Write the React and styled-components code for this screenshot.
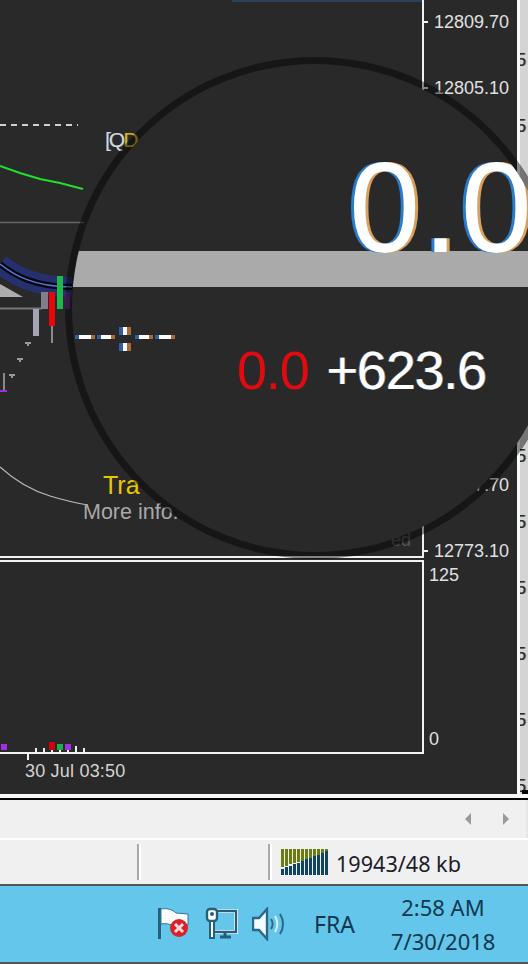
import React from "react";
import styled, { createGlobalStyle } from "styled-components";

const GlobalStyle = createGlobalStyle`
	html, body {
		margin: 0;
		padding: 0;
		background: #f0f0f0;
	}
	* {
		box-sizing: border-box;
	}
`;

const Page = styled.div`
	position: relative;
	width: 528px;
	height: 964px;
	overflow: hidden;
	display: flex;
	flex-direction: column;
	font-family: "Liberation Sans", Arial, sans-serif;
`;

const ChartWindow = styled.div`
	display: flex;
	height: 794px;
	background: #292929;
`;

const FrameColumn = styled.div`
	width: 424px;
	display: flex;
	flex-direction: column;
`;

const PriceFrame = styled.div`
	position: relative;
	height: 558px;
	border-right: 2px solid #f2f2f2;
	border-bottom: 2px solid #f2f2f2;
`;

const VolumeFrame = styled.div`
	position: relative;
	height: 194px;
	margin-top: 2px;
	border-top: 2px solid #f2f2f2;
	border-right: 2px solid #f2f2f2;
	border-bottom: 2px solid #f2f2f2;
`;

const ChartDrawing = styled.svg`
	display: block;
	width: 100%;
	height: 100%;
`;

const TimeLabel = styled.div`
	position: relative;
	margin-top: 8px;
	padding-left: 25px;
	font-size: 18px;
	line-height: 18px;
	letter-spacing: 0.2px;
	color: #d4d4d4;

	&::before {
		content: "";
		position: absolute;
		left: 27px;
		top: -8px;
		width: 2px;
		height: 6px;
		background: #f2f2f2;
	}
`;

const AxisColumn = styled.div`
	width: 93px;
	display: flex;
	flex-direction: column;
`;

const PriceAxis = styled.div`
	height: 547px;
	margin-top: 13px;
	display: flex;
	flex-direction: column;
	justify-content: space-between;
`;

const VolumeAxis = styled.div`
	height: 182px;
	margin-top: 6px;
	padding-left: 5px;
	display: flex;
	flex-direction: column;
	justify-content: space-between;
`;

const AxisLabel = styled.div`
	display: flex;
	align-items: center;
	height: 18px;
	font-size: 18px;
	line-height: 18px;
	color: #e0e0e0;

	&::before {
		content: "";
		display: ${(p) => (p.$tick ? "block" : "none")};
		width: 4px;
		height: 2px;
		margin-right: 6px;
		background: #f2f2f2;
	}
`;

const NeighbourStrip = styled.div`
	position: relative;
	width: 11px;
	padding-top: 27px;
	overflow: hidden;
	background: #d4d4d4;
	border-left: 3px solid #fafafa;

	&::after {
		content: "";
		position: absolute;
		right: 0;
		bottom: 0;
		width: 6px;
		height: 4px;
		background: #000;
	}
`;

const NeighbourDigit = styled.div`
	height: 66px;
	margin-left: -4px;
	font-size: 18px;
	line-height: 66px;
	color: #14304f;
	text-shadow: 1px 0 #c08a40;
`;

const ChartText = styled.div`
	position: absolute;
	left: ${(p) => p.$left}px;
	top: ${(p) => p.$top}px;
	font-size: ${(p) => p.$size}px;
	line-height: 1;
	color: ${(p) => p.$color};
	white-space: nowrap;
`;

const QuoteTag = styled.div`
	position: absolute;
	left: 105px;
	top: 129px;
	font-size: 21px;
	line-height: 1;
	letter-spacing: -2px;
	color: #d8d8d8;
	text-shadow: 1px 0 #33507a;

	span {
		color: #d8b400;
	}
`;

const WindowEdge = styled.div`
	height: 6px;
	background: #f6f6f6;
	border-bottom: 2px solid #000;
`;

const ScrollRow = styled.div`
	height: 38px;
	display: flex;
	align-items: center;
	justify-content: flex-end;
	gap: 32px;
	padding-right: 17px;
	background: #f0f0f0;
	border-right: 2px solid #e6e6e6;
`;

const ScrollArrow = styled.div`
	width: 0;
	height: 0;
	border-top: 6px solid transparent;
	border-bottom: 6px solid transparent;
	border-left: ${(p) => (p.$right ? "6px solid #9a9a9a" : "none")};
	border-right: ${(p) => (p.$right ? "none" : "6px solid #9a9a9a")};
`;

const StatusBar = styled.div`
	height: 46px;
	display: flex;
	align-items: center;
	background: #f0f0f0;
	border-top: 2px solid #fff;
`;

const StatusCell = styled.div`
	width: ${(p) => p.$width}px;
	height: 36px;
	display: flex;
	align-items: center;
	border-right: 2px solid #fff;
	position: relative;

	&::after {
		content: "";
		position: absolute;
		right: 0;
		top: 0;
		bottom: 0;
		width: 2px;
		background: #a8a8a8;
	}
`;

const TrafficCell = styled.div`
	display: flex;
	align-items: center;
	gap: 8px;
	padding-left: 9px;
	font-family: "Noto Sans", sans-serif;
	font-size: 21.6px;
	color: #1c1c2c;

	span {
		padding-top: 3px;
	}
`;

const Taskbar = styled.div`
	height: 80px;
	display: flex;
	align-items: center;
	padding-left: 157px;
	background: #63c6ea;
	border-top: 2px solid #555;
	border-bottom: 2px solid #555;
	font-family: "Noto Sans", sans-serif;
	color: #12384f;
`;

const TrayIcons = styled.div`
	display: flex;
	gap: 14px;
`;

const Language = styled.div`
	margin-left: 29px;
	font-size: 23px;
`;

const Clock = styled.div`
	width: 104px;
	margin-left: 36px;
	text-align: center;
	font-size: 22px;
	line-height: 34px;
`;

const Magnifier = styled.div`
	position: absolute;
	left: 65px;
	top: 57px;
	width: 500px;
	height: 502px;
	border-radius: 50%;
	border: 7px solid rgba(0, 0, 0, 0.45);
	background: #292929;
	background-clip: padding-box;
`;

const MagnifierBody = styled.div`
	width: 100%;
	height: 100%;
	border-radius: 50%;
	overflow: hidden;
	position: relative;
`;

const BigReading = styled.div`
	height: 187px;
	padding-left: 277px;
	display: flex;
	align-items: flex-end;
	font-size: 128px;
	line-height: 128px;
	letter-spacing: 2.5px;
	color: #fff;
	text-shadow: -3px 0 #2d7cc8, 3px 0 #d9a060;
	white-space: nowrap;

	span {
		margin-bottom: -21px;
	}
`;

const GreyBand = styled.div`
	height: 36px;
	background: #aaa;
`;

const ReadingRow = styled.div`
	display: flex;
	margin-top: 52px;
	padding-left: 165px;
	gap: 18px;
	font-size: 54px;
	line-height: 62px;
	letter-spacing: -1.2px;
	white-space: nowrap;
`;

const Reading = styled.div`
	color: ${(p) => p.$color};
	text-shadow: ${(p) => (p.$fringe ? "-1px 0 #2d6cc0, 1px 0 #c88a50" : "none")};
`;

const Crosshair = styled.svg`
	position: absolute;
	left: 0;
	top: 263px;
`;

// crosshair dashes, drawn with the blue/orange fringe of the magnified pixels
const hDashes = [
	[3, 20],
	[25, 18],
	[63, 18],
	[83, 20],
];

const CrosshairMark = () => (
	<Crosshair width="110" height="32" viewBox="0 0 110 32">
		{hDashes.map(([x, w]) => (
			<g key={x}>
				<rect x={x} y="8" width={w} height="4" fill="#fff" />
				<rect x={x} y="8" width="4" height="4" fill="#2d5fa8" />
				<rect x={x + w - 4} y="8" width="4" height="4" fill="#a86a38" />
			</g>
		))}
		{[0, 16].map((y) => (
			<g key={y}>
				<rect x="47" y={y} width="12" height={8} fill="#fff" />
				<rect x="47" y={y} width="4" height={8} fill="#2d5fa8" />
				<rect x="55" y={y} width="4" height={8} fill="#a86a38" />
			</g>
		))}
	</Crosshair>
);

const bandPath = "M0 264 C 14 275, 34 287, 72 287";

const PriceDrawing = () => (
	<ChartDrawing viewBox="0 0 422 556">
		<rect x="232" y="0" width="190" height="2" fill="#2c4058" />
		<line x1="0" y1="125" x2="78" y2="125" stroke="#cfcfcf" strokeWidth="2" strokeDasharray="6 5" />
		<polyline points="0,166 20,173 40,179 60,183 83,189" fill="none" stroke="#1fe02c" strokeWidth="2" />
		<line x1="0" y1="222.5" x2="84" y2="222.5" stroke="#666" strokeWidth="1.5" />
		<polygon points="0,284 23,297 0,297" fill="#adadad" />
		<path d={bandPath} fill="none" stroke="#25306f" strokeWidth="20" />
		<path d={bandPath} fill="none" stroke="#05060e" strokeWidth="6" />
		<path d={bandPath} fill="none" stroke="#5a78d8" strokeWidth="1.5" />
		<line x1="0" y1="308.5" x2="42" y2="308.5" stroke="#777" strokeWidth="2" />
		<rect x="41" y="292" width="7" height="17" fill="#7f7f8c" />
		<rect x="33" y="309" width="6" height="27" fill="#a4a4b4" />
		<rect x="51" y="325" width="2" height="18" fill="#8a8a94" />
		<rect x="49" y="292" width="6" height="34" fill="#e8060c" />
		<rect x="57" y="276" width="6" height="33" fill="#1cb84c" />
		<rect x="65" y="292" width="5" height="17" fill="#6c2a90" />
		{[
			[28, 342],
			[20, 358],
			[12, 374],
		].map(([x, y]) => (
			<path key={x} d={`M${x - 3} ${y}h6v2h-2v2h-2v-2h-2z`} fill="#999" />
		))}
		<rect x="3" y="373" width="2" height="17" fill="#888" />
		<rect x="0" y="390" width="7" height="2" fill="#a030d0" />
		<path d="M0 467 C 12 478, 30 490, 50 496 S 75 503, 88 505" fill="none" stroke="#bbb" strokeWidth="1.2" />
	</ChartDrawing>
);

const markers = [
	[1, 744, "#a030e0"],
	[49, 742, "#d00010"],
	[57, 744, "#18b040"],
	[65, 744, "#a030e0"],
];

const VolumeDrawing = () => (
	<ChartDrawing viewBox="0 0 422 190">
		{[36, 44, 52, 60, 68].map((x) => (
			<rect key={x} x={x - 1} y="186" width="2" height="4" fill="#eee" />
		))}
		<rect x="75" y="184" width="2" height="6" fill="#eee" />
		<rect x="83" y="186" width="2" height="4" fill="#eee" />
		{markers.map(([x, y, c]) => (
			<rect key={x} x={x} y={y - 562} width="6" height={750 - y} fill={c} />
		))}
	</ChartDrawing>
);

const SignalIcon = () => {
	const bars = Array.from({ length: 12 }, (_, i) => i);
	return (
		<svg width="47" height="26" viewBox="0 0 47 26" shapeRendering="crispEdges">
			{bars.map((i) => {
				const top = Math.round(18 - i * 1.3);
				const low = Math.round(20 - i * 1.6);
				return (
					<g key={i}>
						<rect x={i * 4} y="0" width="3" height={top} fill="#6b7d12" />
						<rect x={i * 4} y={low} width="3" height={26 - low} fill="#0e4563" />
					</g>
				);
			})}
		</svg>
	);
};

const FlagIcon = () => (
	<svg width="34" height="34" viewBox="0 0 34 34">
		<rect x="1" y="1" width="3" height="31" fill="#24607a" />
		<path d="M4 2 C 9 1, 15 2, 19 6 L 31 7 V 18 L 18 19 C 13 17, 8 16, 4 17 Z" fill="#fff" stroke="#2d7a9c" strokeWidth="1" />
		<circle cx="22" cy="21" r="9" fill="#d8222a" />
		<path d="M18 17 L26 25 M26 17 L18 25" stroke="#ffd8d8" strokeWidth="3" />
	</svg>
);

const NetworkIcon = () => (
	<svg width="33" height="34" viewBox="0 0 33 34" fill="none">
		<path d="M11 4 H31 V25 H8" stroke="#fff" strokeWidth="4" />
		<path d="M11 4 H31 V25 H8" stroke="#24607a" strokeWidth="2.4" />
		<path d="M20 25 V29 M15 30 H26" stroke="#24607a" strokeWidth="3" />
		<rect x="2" y="2" width="10" height="12" rx="3" fill="#fff" stroke="#24607a" strokeWidth="2.4" />
		<rect x="5" y="14" width="4" height="17" fill="#fff" stroke="#24607a" strokeWidth="2" />
		<circle cx="7" cy="7" r="2" fill="#24607a" />
	</svg>
);

const SpeakerIcon = () => (
	<svg width="33" height="34" viewBox="0 0 33 34" fill="none">
		<path d="M1 11 H7 L15 2 V32 L7 23 H1 Z" fill="#f2fbfe" stroke="#2a6a88" strokeWidth="2.4" />
		<path d="M19 12 C 21 15, 21 19, 19 22" stroke="#2a6a88" strokeWidth="2" />
		<path d="M23 9 C 26 14, 26 20, 23 25" stroke="#d4f1fa" strokeWidth="2" />
		<path d="M28 7 C 32 13, 32 21, 28 27" stroke="#2a6a88" strokeWidth="2" />
	</svg>
);

// the middle rows of both axes sit behind the magnifier
const priceLabels = ["12809.70", "12805.10", "", "", "", "", "", "12777.70", "12773.10"];
const neighbourDigits = ["5", "5", "", "", "", "", "5", "5", "5", "5", "5", "5"];

const App = () => {
	return (
		<Page>
			<GlobalStyle />
			<ChartWindow>
				<FrameColumn>
					<PriceFrame>
						<PriceDrawing />
						<QuoteTag>
							[Q<span>D</span>
						</QuoteTag>
						<ChartText $left={103} $top={473} $size={25} $color="#e6c800">
							Tra
						</ChartText>
						<ChartText $left={83} $top={502} $size={21.5} $color="#a8a8a8">
							More info.
						</ChartText>
						<ChartText $left={391} $top={531} $size={18} $color="#555">
							ed
						</ChartText>
					</PriceFrame>
					<VolumeFrame>
						<VolumeDrawing />
					</VolumeFrame>
					<TimeLabel>30 Jul 03:50</TimeLabel>
				</FrameColumn>
				<AxisColumn>
					<PriceAxis>
						{priceLabels.map((label, i) => (
							<AxisLabel key={i} $tick={label !== ""}>
								{label}
							</AxisLabel>
						))}
					</PriceAxis>
					<VolumeAxis>
						<AxisLabel>125</AxisLabel>
						<AxisLabel>0</AxisLabel>
					</VolumeAxis>
				</AxisColumn>
				<NeighbourStrip>
					{neighbourDigits.map((digit, i) => (
						<NeighbourDigit key={i}>{digit}</NeighbourDigit>
					))}
				</NeighbourStrip>
			</ChartWindow>
			<WindowEdge />
			<ScrollRow>
				<ScrollArrow />
				<ScrollArrow $right />
			</ScrollRow>
			<StatusBar>
				<StatusCell $width={141} />
				<StatusCell $width={131} />
				<TrafficCell>
					<SignalIcon />
					<span>19943/48 kb</span>
				</TrafficCell>
			</StatusBar>
			<Taskbar>
				<TrayIcons>
					<FlagIcon />
					<NetworkIcon />
					<SpeakerIcon />
				</TrayIcons>
				<Language>FRA</Language>
				<Clock>
					2:58 AM
					<br />
					7/30/2018
				</Clock>
			</Taskbar>
			<Magnifier>
				<MagnifierBody>
					<BigReading>
						<span>0.0</span>
					</BigReading>
					<GreyBand />
					<ReadingRow>
						<Reading $color="#e00a10">0.0</Reading>
						<Reading $color="#fff" $fringe>
							+623.6
						</Reading>
					</ReadingRow>
					<CrosshairMark />
				</MagnifierBody>
			</Magnifier>
		</Page>
	);
};

export default App;
